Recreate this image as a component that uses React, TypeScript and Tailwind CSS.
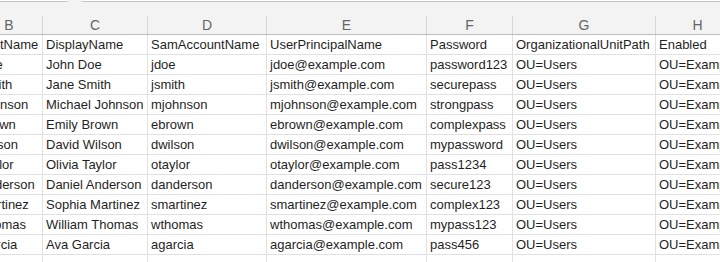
const columns = [
  { letter: "B", width: 67 },
  { letter: "C", width: 105 },
  { letter: "D", width: 119 },
  { letter: "E", width: 160 },
  { letter: "F", width: 86 },
  { letter: "G", width: 143 },
  { letter: "H", width: 84 },
  { letter: "I", width: 80 },
];

const colClass = [
  "w-[67px]",
  "w-[105px]",
  "w-[119px]",
  "w-[160px]",
  "w-[86px]",
  "w-[143px]",
  "w-[84px]",
  "w-[80px]",
];

const rows: string[][] = [
  ["LastName", "DisplayName", "SamAccountName", "UserPrincipalName", "Password", "OrganizationalUnitPath", "Enabled"],
  ["Doe", "John Doe", "jdoe", "jdoe@example.com", "password123", "OU=Users", "OU=Example,DC=com"],
  ["Smith", "Jane Smith", "jsmith", "jsmith@example.com", "securepass", "OU=Users", "OU=Example,DC=com"],
  ["Johnson", "Michael Johnson", "mjohnson", "mjohnson@example.com", "strongpass", "OU=Users", "OU=Example,DC=com"],
  ["Brown", "Emily Brown", "ebrown", "ebrown@example.com", "complexpass", "OU=Users", "OU=Example,DC=com"],
  ["Wilson", "David Wilson", "dwilson", "dwilson@example.com", "mypassword", "OU=Users", "OU=Example,DC=com"],
  ["Taylor", "Olivia Taylor", "otaylor", "otaylor@example.com", "pass1234", "OU=Users", "OU=Example,DC=com"],
  ["Anderson", "Daniel Anderson", "danderson", "danderson@example.com", "secure123", "OU=Users", "OU=Example,DC=com"],
  ["Martinez", "Sophia Martinez", "smartinez", "smartinez@example.com", "complex123", "OU=Users", "OU=Example,DC=com"],
  ["Thomas", "William Thomas", "wthomas", "wthomas@example.com", "mypass123", "OU=Users", "OU=Example,DC=com"],
  ["Garcia", "Ava Garcia", "agarcia", "agarcia@example.com", "pass456", "OU=Users", "OU=Example,DC=com"],
  ["", "", "", "", "", "", ""],
];

export default function App() {
  return (
    <div className="h-[262px] w-[720px] overflow-hidden bg-white font-['Liberation_Sans',Arial,sans-serif] text-[13px] text-[#1f1f1f]">
      {/* formula bar edges + column headers */}
      <div className="bg-[#f3f3f3]">
        <div className="flex h-[16px] items-start">
          <div className="h-[2px] w-[68px] rounded-br-[3px] border-b border-[#c4c4c4] bg-white" />
          <div className="ml-[13px] h-[2px] flex-1 rounded-bl-[3px] border-b border-[#c4c4c4] bg-white" />
        </div>
        <div className="-ml-[24px] flex h-[19px] border-b border-[#bdbdbd]">
          {columns.map((c, i) => (
            <div
              key={c.letter}
              className={`${colClass[i]} flex shrink-0 items-center justify-center border-r border-[#d6d6d6] text-[14px] leading-none text-[#666666]`}
            >
              {c.letter}
            </div>
          ))}
        </div>
      </div>

      {/* cells */}
      <div className="-ml-[24px]">
        {rows.map((r, ri) => (
          <div key={ri} className="flex h-[20px] border-b border-[#e1e1e1]">
            {r.map((v, ci) => (
              <div
                key={ci}
                className={`${colClass[ci]} flex shrink-0 items-center whitespace-nowrap border-r border-[#e1e1e1] pl-[3px] pt-[1px] ${ci === 0 ? "justify-start overflow-hidden" : ""}`}
              >
                {v}
              </div>
            ))}
            <div className={`${colClass[7]} shrink-0 border-r border-[#e1e1e1]`} />
          </div>
        ))}
      </div>
    </div>
  );
}
